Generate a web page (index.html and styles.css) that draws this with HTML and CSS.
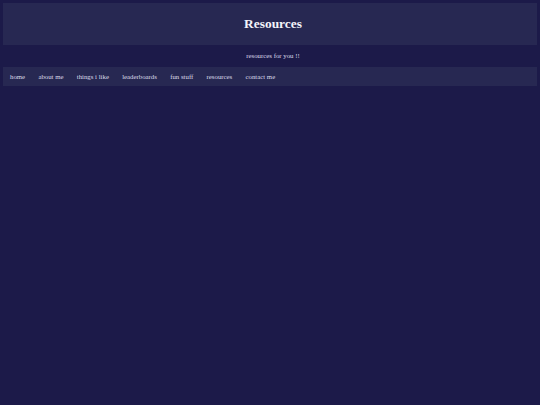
FILE: index.html
```html
<!DOCTYPE html>
<html>
<head>
<meta charset="utf-8">
<title>Resources</title>
<link rel="stylesheet" href="styles.css">
</head>
<body>
<header class="banner">
  <h1 class="title">Resources</h1>
</header>
<p class="subtitle">resources for you !!</p>
<nav class="nav">
  <a class="nav-link" href="#">home</a>
  <a class="nav-link" href="#">about me</a>
  <a class="nav-link" href="#">things i like</a>
  <a class="nav-link" href="#">leaderboards</a>
  <a class="nav-link" href="#">fun stuff</a>
  <a class="nav-link" href="#">resources</a>
  <a class="nav-link" href="#">contact me</a>
</nav>
</body>
</html>
```
FILE: styles.css
```css
html {
  background: #1c1a49;
}
body {
  margin: 3.2px;
  background: #1c1a49;
  font-family: "Liberation Serif", "Times New Roman", serif;
  color: #e6e6f2;
}
.banner {
  height: 42px;
  padding-left: 6px;
  background: #272852;
  display: flex;
  align-items: center;
  justify-content: center;
}
.title {
  margin: 0;
  font-size: 13.4px;
  font-weight: bold;
  color: #f4f4fa;
  line-height: 1;
}
.subtitle {
  margin: 0;
  height: 21px;
  padding: 0 0 1px 6px;
  display: flex;
  align-items: center;
  justify-content: center;
  font-size: 6.8px;
  color: #dcdcea;
}
.nav {
  height: 19px;
  background: #272852;
  display: flex;
  align-items: center;
  padding-left: 0.2px;
}
.nav-link {
  padding: 0 6.65px;
  font-size: 6.8px;
  color: #dcdcea;
  text-decoration: none;
}
```
